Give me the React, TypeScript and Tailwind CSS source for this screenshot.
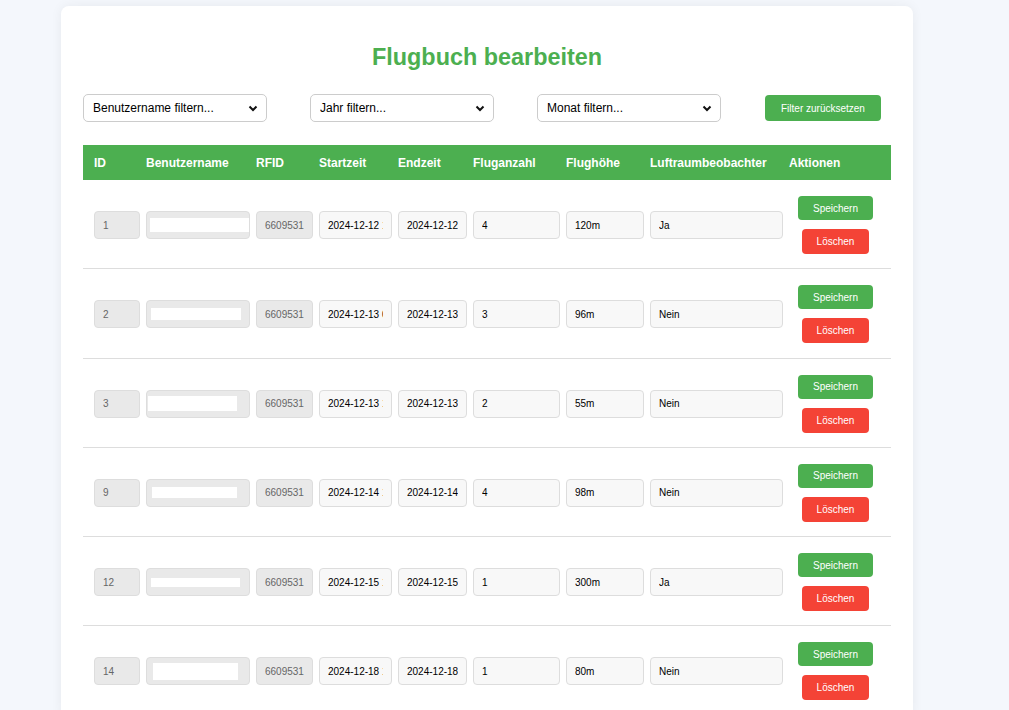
import React from "react";

type Row = {
  id: number;
  start: string;
  end: string;
  count: string;
  height: string;
  observer: string;
  mask: { x: number; w: number; h: number };
};

const rows: Row[] = [
  { id: 1, start: "2024-12-12 10:15", end: "2024-12-12", count: "4", height: "120m", observer: "Ja", mask: { x: 4, w: 99, h: 14 } },
  { id: 2, start: "2024-12-13 09:40", end: "2024-12-13", count: "3", height: "96m", observer: "Nein", mask: { x: 5, w: 90, h: 12 } },
  { id: 3, start: "2024-12-13 14:05", end: "2024-12-13", count: "2", height: "55m", observer: "Nein", mask: { x: 2, w: 89, h: 15 } },
  { id: 9, start: "2024-12-14 11:20", end: "2024-12-14", count: "4", height: "98m", observer: "Nein", mask: { x: 6, w: 85, h: 11 } },
  { id: 12, start: "2024-12-15 16:30", end: "2024-12-15", count: "1", height: "300m", observer: "Ja", mask: { x: 5, w: 89, h: 9 } },
  { id: 14, start: "2024-12-18 13:10", end: "2024-12-18", count: "1", height: "80m", observer: "Nein", mask: { x: 7, w: 85, h: 17 } },
];

const cols = "grid grid-cols-[46px_104px_57px_73px_69px_87px_78px_133px_93px] gap-x-[6px] px-[11px]";

const headers = ["ID", "Benutzername", "RFID", "Startzeit", "Endzeit", "Fluganzahl", "Flughöhe", "Luftraumbeobachter", "Aktionen"];

const Chevron = () => (
  <svg width="10" height="7" viewBox="0 0 10 7" className="pointer-events-none absolute right-[9px] top-[11px]">
    <polyline points="1.5,1.5 5,5 8.5,1.5" fill="none" stroke="#111" strokeWidth="2" />
  </svg>
);

const FilterSelect = ({ label }: { label: string }) => (
  <div className="relative w-[184px]">
    <select className="h-[28px] w-full appearance-none rounded-[5px] border border-[#cccccc] bg-white pl-[9px] text-[12px] text-black outline-none">
      <option>{label}</option>
    </select>
    <Chevron />
  </div>
);

const readonlyBox = "h-[28px] w-full rounded-[4px] border border-[#dddddd] bg-[#e9e9e9] px-[8px] text-[10px] text-[#666666] outline-none";
const editBox = "h-[28px] w-full rounded-[4px] border border-[#dddddd] bg-[#f8f8f8] px-[8px] text-[10px] text-black outline-none";

export default function App() {
  return (
    <div className="min-h-[710px] bg-[#f4f7fc] pt-[6px] font-['Liberation_Sans',Arial,sans-serif]">
      <div className="ml-[61px] w-[852px] rounded-t-[8px] bg-white px-[22px] pt-[37px] shadow-[0_0_12px_rgba(0,0,0,0.06)]">
        <h1 className="mb-[23px] text-center text-[23.4px] font-bold leading-[28px] text-[#4caf50]">
          Flugbuch bearbeiten
        </h1>

        {/* Filter */}
        <div className="mb-[23px] flex items-center gap-[43px]">
          <FilterSelect label="Benutzername filtern..." />
          <FilterSelect label="Jahr filtern..." />
          <FilterSelect label="Monat filtern..." />
          <button className="ml-[1px] h-[26px] rounded-[4px] bg-[#4caf50] px-[16px] text-[10px] text-white">
            Filter zurücksetzen
          </button>
        </div>

        {/* Tabelle */}
        <div className={`${cols} h-[35px] items-center bg-[#4caf50] text-[12px] font-bold text-white`}>
          {headers.map((h) => (
            <div key={h} className="whitespace-nowrap">
              {h}
            </div>
          ))}
        </div>

        {rows.map((r) => (
          <div key={r.id} className={`${cols} items-center border-b border-[#dddddd] pt-[16px] pb-[14.25px]`}>
            <input readOnly value={r.id} className={readonlyBox} />
            <div className="flex h-[28px] items-center rounded-[4px] border border-[#dddddd] bg-[#e9e9e9]">
              <div
                className="bg-white"
                style={{ marginLeft: r.mask.x - 1, width: r.mask.w, height: r.mask.h }}
              />
            </div>
            <input readOnly value="6609531" className={readonlyBox} />
            <input readOnly value={r.start} className={editBox} />
            <input readOnly value={r.end} className={editBox} />
            <input readOnly value={r.count} className={editBox} />
            <input readOnly value={r.height} className={editBox} />
            <input readOnly value={r.observer} className={editBox} />
            <div className="flex flex-col items-center gap-[9px]">
              <button className="h-[24px] rounded-[4px] bg-[#4caf50] px-[15px] text-[10px] text-white">
                Speichern
              </button>
              <button className="h-[25px] rounded-[4px] bg-[#f44336] px-[15px] text-[10px] text-white">
                Löschen
              </button>
            </div>
          </div>
        ))}
      </div>
    </div>
  );
}
